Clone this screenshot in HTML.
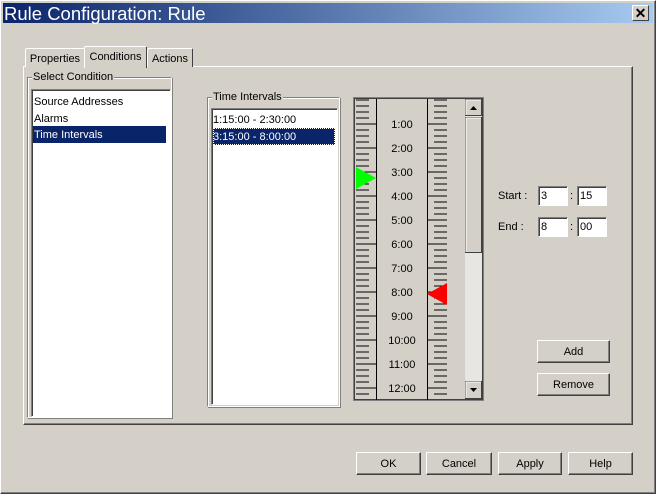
<!DOCTYPE html>
<html><head><meta charset="utf-8"><style>
*{box-sizing:border-box;margin:0;padding:0}
body{width:656px;height:494px;background:#d4d0c8;font-family:"Liberation Sans",sans-serif;font-size:11px;color:#000;position:relative;overflow:hidden}
.a{position:absolute}
.win{left:0;top:0;width:656px;height:494px;border:1px solid;border-color:#fff #404040 #404040 #fff;box-shadow:inset -1px -1px #808080}
.title{left:3px;top:3px;width:650px;height:20px;background:linear-gradient(90deg,#0a246a,#a6caf0);color:#fff;font-size:18.5px;line-height:21px;padding-left:1px}
.xb{left:632px;top:5px;width:17px;height:16px;background:#d4d0c8;border:1px solid;border-color:#fff #404040 #404040 #fff;font-size:14px;font-weight:bold;text-align:center;line-height:14px;color:#000}
.raise{border:1px solid;border-color:#fff #404040 #404040 #fff;box-shadow:inset -1px -1px #808080}
.sunk{border:1px solid;border-color:#808080 #fff #fff #808080;box-shadow:inset 1px 1px #404040}
.grp{border:1px solid;border-color:#808080 #fff #fff #808080;box-shadow:inset 1px 1px #fff, 1px 1px #808080}
.lbl{background:#d4d0c8;padding:0 1px}
.tab{border:1px solid;border-bottom:none;border-color:#fff #404040 #404040 #fff;border-radius:2px 2px 0 0;background:#d4d0c8;text-align:center}
.sel{background:#0a246a;color:#fff}
.btn{text-align:center;line-height:22px;font-size:11px}
.wf{background:#fff;line-height:16px;padding-left:2px;font-size:11px}
</style></head><body>
<div class="a win"></div>
<div class="a title">Rule Configuration: Rule</div>
<div class="a xb">✕</div>

<div class="a raise" style="left:23px;top:66px;width:610px;height:359px"></div>
<div class="a tab" style="left:25px;top:48px;width:60px;height:19px;line-height:21px">Properties</div>
<div class="a tab" style="left:147px;top:48px;width:46px;height:19px;line-height:21px">Actions</div>
<div class="a tab" style="left:84px;top:46px;width:63px;height:22px;line-height:21px;border-bottom:none;z-index:2">Conditions</div>

<div class="a grp" style="left:27px;top:77px;width:145px;height:341px"></div>
<div class="a lbl" style="left:32px;top:71px;height:13px;line-height:13px">Select Condition</div>
<div class="a sunk" style="left:31px;top:89px;width:140px;height:328px;background:#fff"></div>
<div class="a" style="left:34px;top:94px;line-height:17px">Source Addresses<br>Alarms</div>
<div class="a sel" style="left:33px;top:126px;width:133px;height:17px;line-height:18px;padding-left:1px">Time Intervals</div>

<div class="a grp" style="left:207px;top:97px;width:133px;height:310px"></div>
<div class="a lbl" style="left:212px;top:91px;height:13px;line-height:13px">Time Intervals</div>
<div class="a sunk" style="left:211px;top:108px;width:127px;height:297px;background:#fff"></div>
<div class="a" style="left:213px;top:112px;line-height:17px">1:15:00 - 2:30:00</div>
<div class="a sel" style="left:213px;top:128px;width:122px;height:17px;line-height:18px;outline:1px dotted #fff;outline-offset:-1px">3:15:00 - 8:00:00</div>

<svg class="a" style="left:353px;top:97px" width="132" height="305" xmlns="http://www.w3.org/2000/svg">
<rect x="0.5" y="0.5" width="130" height="303" fill="none" stroke="#808080"/>
<rect x="1.5" y="1.5" width="128" height="301" fill="none" stroke="#404040"/>
<line x1="23.5" y1="2" x2="23.5" y2="303" stroke="#000"/>
<line x1="74.5" y1="2" x2="74.5" y2="303" stroke="#000"/>
<g stroke="#000" shape-rendering="crispEdges">
<path d="M3 3H16M3 9H16M3 15H16M3 21H16M3 27H23M3 33H16M3 39H16M3 45H16M3 51H23M3 57H16M3 63H16M3 69H16M3 75H23M3 81H16M3 87H16M3 93H16M3 99H23M3 105H16M3 111H16M3 117H16M3 123H23M3 129H16M3 135H16M3 141H16M3 147H23M3 153H16M3 159H16M3 165H16M3 171H23M3 177H16M3 183H16M3 189H16M3 195H23M3 201H16M3 207H16M3 213H16M3 219H23M3 225H16M3 231H16M3 237H16M3 243H23M3 249H16M3 255H16M3 261H16M3 267H23M3 273H16M3 279H16M3 285H16M3 291H23M3 297H16"/>
<path d="M81 3H94M81 9H94M81 15H94M81 21H94M74 27H94M81 33H94M81 39H94M81 45H94M74 51H94M81 57H94M81 63H94M81 69H94M74 75H94M81 81H94M81 87H94M81 93H94M74 99H94M81 105H94M81 111H94M81 117H94M74 123H94M81 129H94M81 135H94M81 141H94M74 147H94M81 153H94M81 159H94M81 165H94M74 171H94M81 177H94M81 183H94M81 189H94M74 195H94M81 201H94M81 207H94M81 213H94M74 219H94M81 225H94M81 231H94M81 237H94M74 243H94M81 249H94M81 255H94M81 261H94M74 267H94M81 273H94M81 279H94M81 285H94M74 291H94M81 297H94"/>
</g>
<polygon points="3,70 23,81 3,92" fill="#00ff00"/>
<polygon points="94,186 74,197 94,208" fill="#ff0000"/>
<g font-family="Liberation Sans" font-size="11" text-anchor="middle">
<text x="49" y="31">1:00</text><text x="49" y="55">2:00</text><text x="49" y="79">3:00</text><text x="49" y="103">4:00</text><text x="49" y="127">5:00</text><text x="49" y="151">6:00</text><text x="49" y="175">7:00</text><text x="49" y="199">8:00</text><text x="49" y="223">9:00</text><text x="49" y="247">10:00</text><text x="49" y="271">11:00</text><text x="49" y="295">12:00</text>
</g>
<rect x="112" y="2" width="17" height="300" fill="#e8e6e2"/>
<rect x="112.5" y="2.5" width="16" height="16" fill="#d4d0c8" stroke="#404040"/>
<path d="M113 18V3H128" stroke="#fff" fill="none"/>
<polygon points="117,13 124,13 120.5,9" fill="#000"/>
<rect x="112.5" y="20.5" width="16" height="135" fill="#d4d0c8" stroke="#404040"/>
<path d="M113 155V21H128" stroke="#fff" fill="none"/>
<rect x="112.5" y="284.5" width="16" height="17" fill="#d4d0c8" stroke="#404040"/>
<path d="M113 301V285H128" stroke="#fff" fill="none"/>
<polygon points="117,291 124,291 120.5,295" fill="#000"/>
</svg>

<div class="a" style="left:498px;top:190px">Start :</div>
<div class="a" style="left:498px;top:221px">End :</div>
<div class="a sunk wf" style="left:538px;top:186px;width:30px;height:20px;line-height:19px">3</div>
<div class="a" style="left:570px;top:190px">:</div>
<div class="a sunk wf" style="left:577px;top:186px;width:30px;height:20px;line-height:19px">15</div>
<div class="a sunk wf" style="left:538px;top:217px;width:30px;height:20px;line-height:19px">8</div>
<div class="a" style="left:570px;top:221px">:</div>
<div class="a sunk wf" style="left:577px;top:217px;width:30px;height:20px;line-height:19px">00</div>

<div class="a raise btn" style="left:537px;top:340px;width:73px;height:23px">Add</div>
<div class="a raise btn" style="left:537px;top:373px;width:73px;height:23px">Remove</div>

<div class="a raise btn" style="left:356px;top:452px;width:65px;height:23px">OK</div>
<div class="a raise btn" style="left:426px;top:452px;width:66px;height:23px">Cancel</div>
<div class="a raise btn" style="left:498px;top:452px;width:64px;height:23px">Apply</div>
<div class="a raise btn" style="left:568px;top:452px;width:65px;height:23px">Help</div>
</body></html>
